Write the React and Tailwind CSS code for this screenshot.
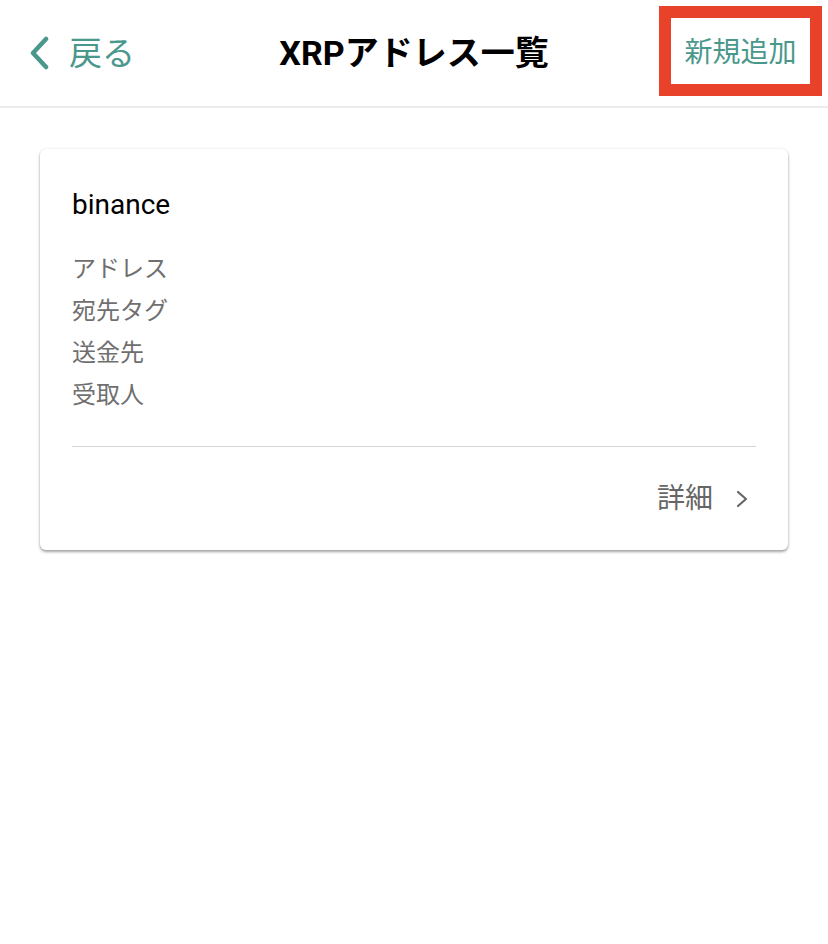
import React from "react";

const labels = ["アドレス", "宛先タグ", "送金先", "受取人"];

export default function App() {
  return (
    <div
      className="w-[828px] h-[944px] bg-white"
      style={{ fontFamily: "Roboto, 'Noto Sans CJK JP', sans-serif" }}
    >
      {/* HEADER */}
      <div className="grid grid-cols-[1fr_auto_1fr] items-center h-[108px] border-b-2 border-[#ececec]">
        <div className="flex items-center pl-[28px] text-[#4a978c]">
          <svg width="24" height="34" viewBox="0 0 24 34" fill="none">
            <path
              d="M18 3 L5 17 L18 31"
              stroke="currentColor"
              strokeWidth="4.5"
              strokeLinecap="round"
              strokeLinejoin="round"
            />
          </svg>
          <span className="ml-[17px] text-[33px] leading-none">戻る</span>
        </div>

        <h1 className="text-[34px] font-bold text-black leading-none">
          XRPアドレス一覧
        </h1>

        <div className="flex justify-end self-start pt-[6px] pr-[6px]">
          <div className="flex items-center justify-center w-[163px] h-[90px] border-[12px] border-[#e8432a]">
            <span className="text-[28px] text-[#4a978c] leading-none mt-[3px]">
              新規追加
            </span>
          </div>
        </div>
      </div>

      {/* CARD */}
      <div className="px-[40px] pt-[41px]">
        <div className="bg-white rounded-[6px] shadow-[0_2px_3px_rgba(0,0,0,0.35),0_0_3px_rgba(0,0,0,0.08)]">
          <div className="px-[32px] pt-[37px]">
            <p className="text-[28px] leading-[38px] text-black">binance</p>

            <div className="mt-[24px]">
              {labels.map((label) => (
                <p
                  key={label}
                  className="text-[24px] leading-[42px] text-[#6f6f6f]"
                >
                  {label}
                </p>
              ))}
            </div>

            <div className="mt-[30px] h-px bg-[#d6d6d6]" />

            <div className="flex items-center justify-end h-[103px] pr-[8px] text-[#666666]">
              <span className="text-[28px] leading-none">詳細</span>
              <svg
                className="ml-[23px]"
                width="12"
                height="18"
                viewBox="0 0 12 18"
                fill="none"
              >
                <path
                  d="M2 2 L10 9 L2 16"
                  stroke="currentColor"
                  strokeWidth="2.2"
                  strokeLinecap="round"
                  strokeLinejoin="round"
                />
              </svg>
            </div>
          </div>
        </div>
      </div>
    </div>
  );
}
